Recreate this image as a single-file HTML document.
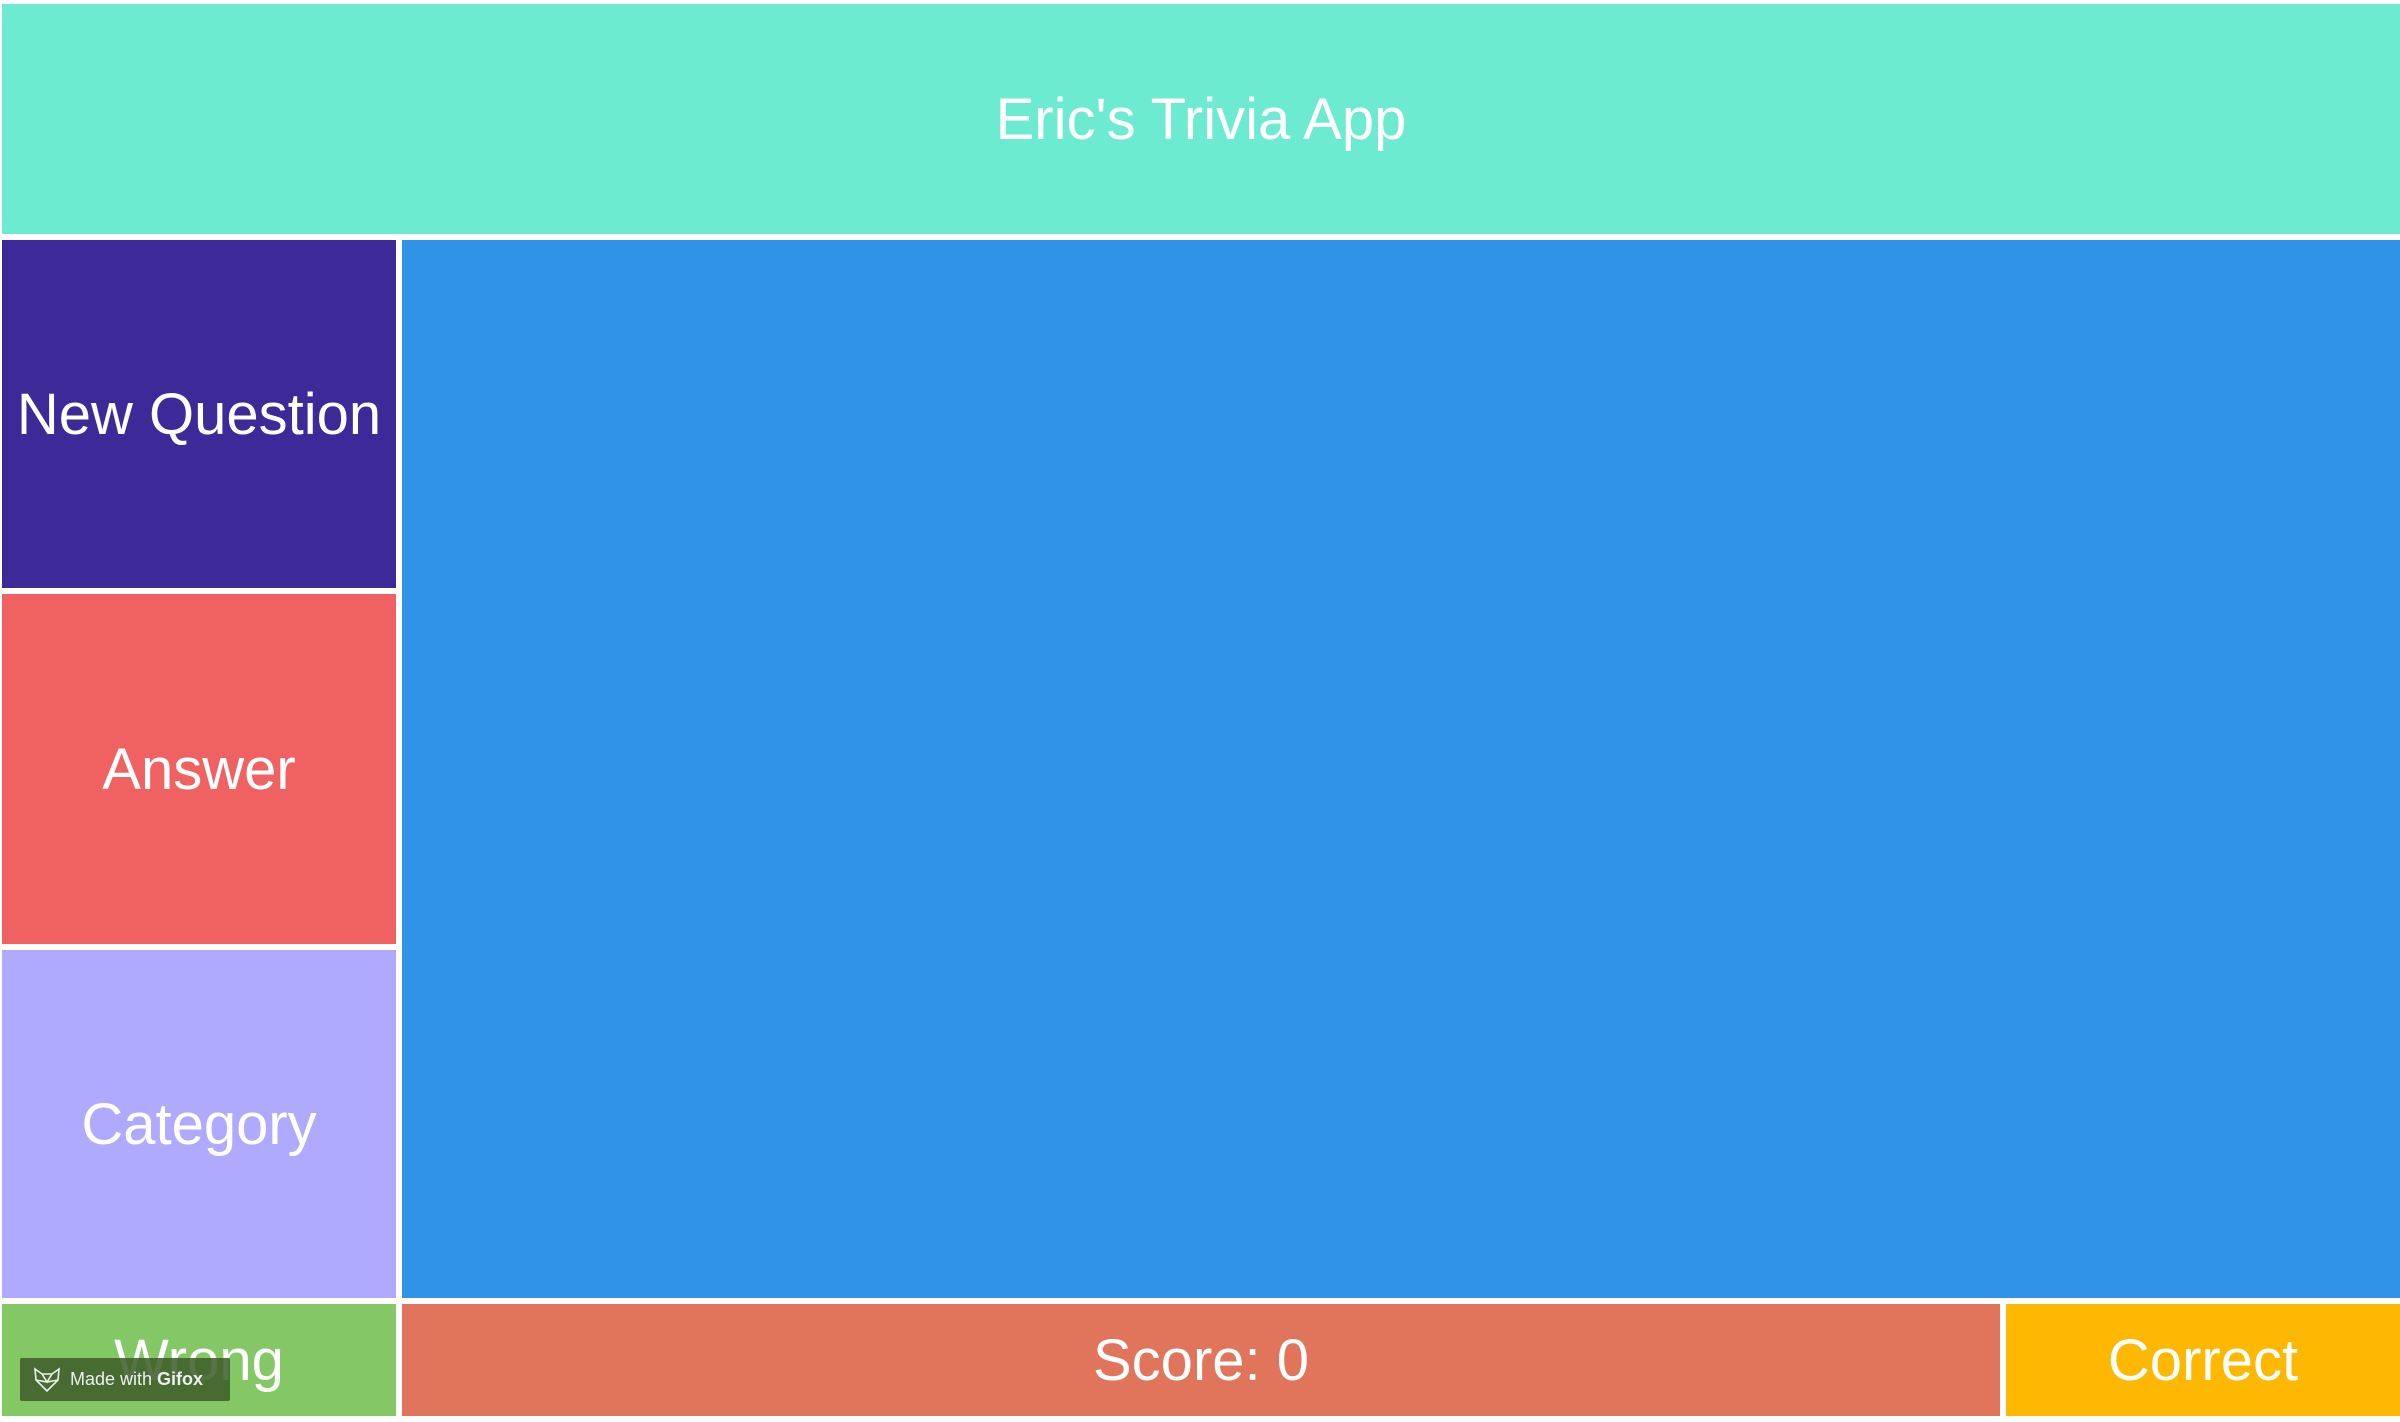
<!DOCTYPE html><html><head><style>
body{margin:0;width:2400px;height:1422px;background:#fff;position:relative;overflow:hidden;font-family:"Liberation Sans",sans-serif;color:#fff}
.b{position:absolute;display:flex;align-items:center;justify-content:center;font-size:58px}
</style></head><body>
<div class="b" style="left:2px;top:4px;width:2398px;height:230px;background:#6cebd0">Eric's Trivia App</div>
<div class="b" style="left:2px;top:240px;width:394px;height:348px;background:#3d2a98">New Question</div>
<div class="b" style="left:2px;top:594px;width:394px;height:350px;background:#f06262">Answer</div>
<div class="b" style="left:2px;top:950px;width:394px;height:348px;background:#afaafd">Category</div>
<div class="b" style="left:402px;top:240px;width:1998px;height:1058px;background:#3193e7"></div>
<div class="b" style="left:2px;top:1304px;width:394px;height:112px;background:#84c865">Wrong</div>
<div class="b" style="left:402px;top:1304px;width:1598px;height:112px;background:#e1755b">Score: 0</div>
<div class="b" style="left:2006px;top:1304px;width:394px;height:112px;background:#feb802">Correct</div>
<div style="position:absolute;left:20px;top:1358px;width:210px;height:43px;background:rgba(60,90,40,0.85);border-radius:2px;display:flex;align-items:center;font-size:18px;color:#eee">
<svg width="30" height="28" viewBox="0 0 30 28" style="margin:0 8px 0 12px"><path d="M3 3 L10 8 L20 8 L27 3 L26 14 L15 25 L4 14 Z M10 8 L15 16 L20 8 M4 14 L15 16 L26 14" fill="none" stroke="#eee" stroke-width="1.6"/></svg>Made with&nbsp;<b>Gifox</b></div>
</body></html>
